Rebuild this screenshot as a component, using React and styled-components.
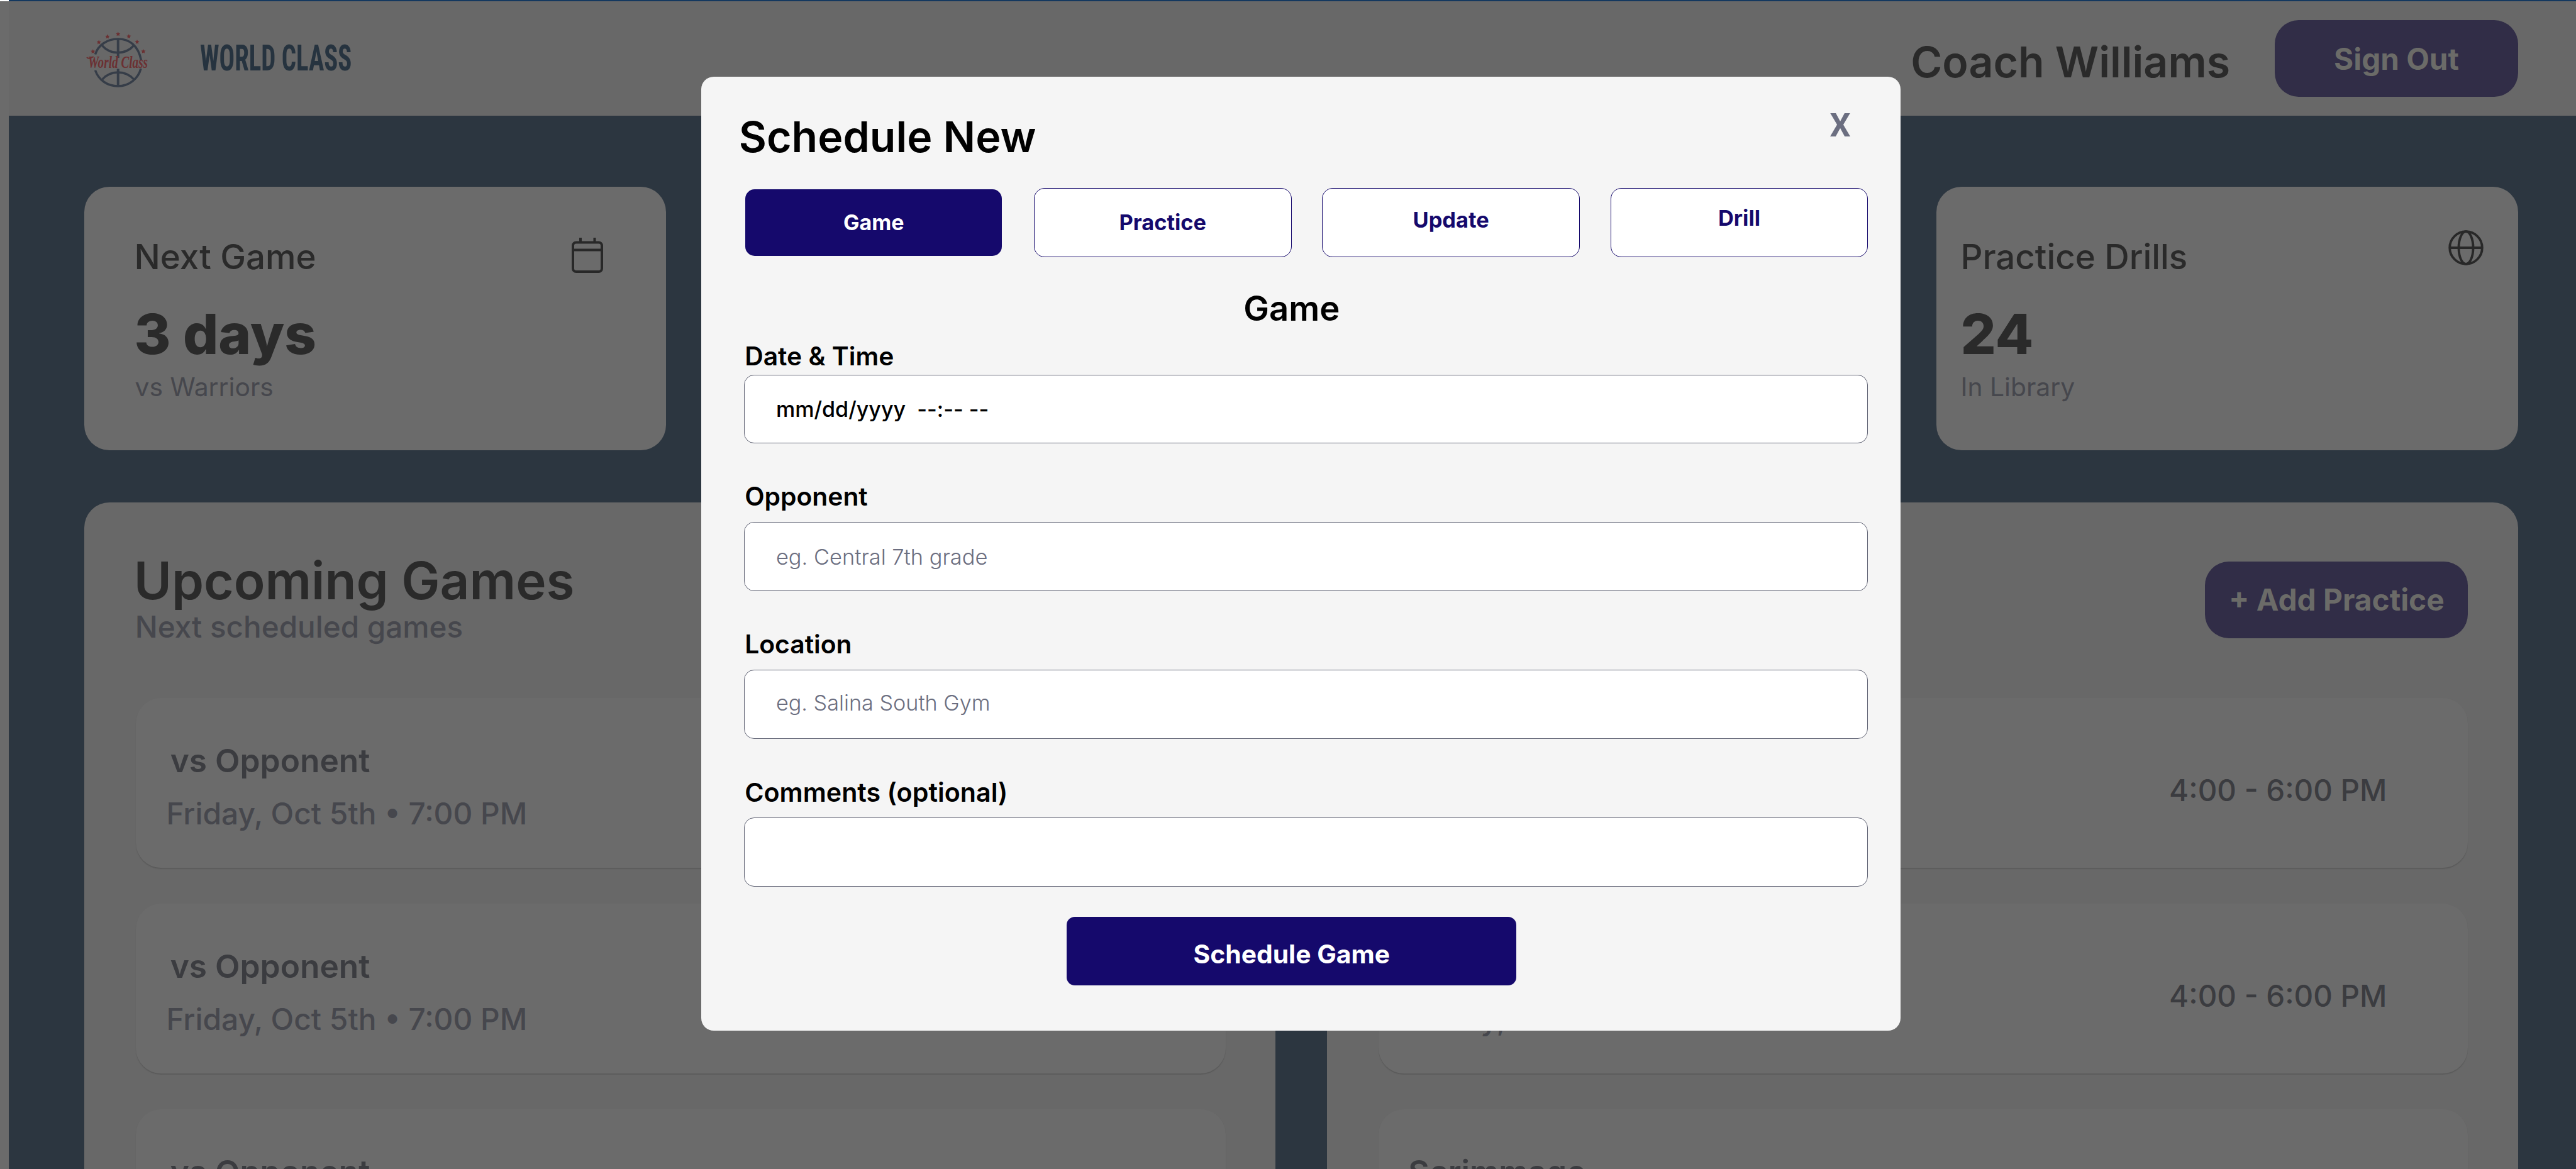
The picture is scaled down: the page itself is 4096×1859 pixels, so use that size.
import React from 'react';
import styled, { createGlobalStyle } from 'styled-components';

const Global = createGlobalStyle`
  * { box-sizing: border-box; }
  body { margin: 0; background: #2c3640; font-family: Inter, "Liberation Sans", sans-serif; }
`;

const Text = styled.span`
  display: block;
  line-height: 1;
  white-space: pre;
  font-size: ${p => p.$size}px;
  font-weight: ${p => p.$weight || 400};
  color: ${p => p.$color || '#2a2a2a'};
  margin-left: ${p => p.$shift || 0}px;
`;

const Page = styled.div`
  display: flex;
  width: 4096px;
  height: 1859px;
  overflow: hidden;
`;
const Rail = styled.div`
  flex: none;
  width: 14px;
  background: #6b6b6b;
  border-top: 2px solid #fff;
`;
const Content = styled.div`
  flex: 1;
  min-width: 0;
  background: #2c3640;
`;
const Header = styled.header`
  display: flex;
  align-items: center;
  height: 184px;
  padding: 0 92px 1px 118px;
  background: #686868;
  border-top: 2px solid #14385f;
`;
const Logo = styled.svg`
  flex: none;
  width: 111px;
  height: 104px;
  margin-top: 2px;
  overflow: visible;
`;
const Brand = styled.div`
  width: 260px;
  margin: 0 auto 1px 75px;
  font: 700 57px/1 "Roboto Condensed", Roboto, sans-serif;
  font-stretch: condensed;
  color: #26333f;
  white-space: nowrap;
  transform: scaleX(0.716);
  transform-origin: left center;
`;
const User = styled.div`
  margin: 11px 71px 0 0;
`;
const PillButton = styled.button`
  display: flex;
  justify-content: center;
  align-items: center;
  flex: none;
  width: ${p => p.$width}px;
  height: 122px;
  padding: ${p => p.$drop || 0}px 0 0;
  border: 0;
  border-radius: 38px;
  background: #312d47;
  font-family: inherit;
`;

const Main = styled.main`
  padding: 112.5px 92px 0 120.2px;
`;
const Stats = styled.section`
  display: grid;
  grid-template-columns: repeat(4, 1fr);
  gap: 56.5px;
  height: 419.5px;
  margin-bottom: 82.5px;
`;
const StatCard = styled.article`
  display: flex;
  justify-content: space-between;
  align-items: flex-start;
  grid-column: ${p => p.$column};
  padding: 84.7px ${p => p.$right}px 0 ${p => p.$left}px;
  border-radius: 40px;
  background: #6b6b6b;
`;
const StatBody = styled.div`
  display: flex;
  flex-direction: column;
`;
const Figure = styled.div`
  height: 159px;
  padding-top: 50.8px;
`;
const Icon = styled.svg`
  flex: none;
  width: ${p => p.$width}px;
  height: 56px;
  margin-top: ${p => p.$top}px;
  fill: none;
  stroke: #282828;
`;

const Panels = styled.section`
  display: grid;
  grid-template-columns: 1fr 1fr;
  gap: 82px;
`;
const Panel = styled.article`
  height: 1200px;
  padding: 0 79.6px 0 82.2px;
  border-radius: 40px;
  background: #686868;
`;
const PanelHead = styled.div`
  display: flex;
  justify-content: space-between;
  align-items: flex-start;
  height: 311.2px;
  padding-top: 84.5px;
`;
const PanelTitles = styled.div`
  display: flex;
  flex-direction: column;
  gap: 8.7px;
`;
const ButtonSlot = styled.div`
  margin-top: 9.5px;
`;
const List = styled.div`
  display: flex;
  flex-direction: column;
  gap: 56.5px;
`;
const Item = styled.div`
  display: flex;
  justify-content: space-between;
  height: 270.5px;
  padding: 0 129px 0 51px;
  border-radius: 40px;
  background: #6b6b6b;
  box-shadow: 0 2px 1px #5c5c5c;
`;
const ItemText = styled.div`
  display: flex;
  flex-direction: column;
  gap: 36.2px;
  padding-top: 74px;
`;
const ItemTime = styled.div`
  padding-top: 123.8px;
`;

const Overlay = styled.div`
  position: fixed;
  inset: 0;
  padding: 122px 0 0 1115.4px;
`;
const Modal = styled.section`
  display: flex;
  flex-direction: column;
  width: 1907px;
  height: 1517px;
  padding: 0 52px 0 68px;
  border-radius: 20px;
  background: #f5f5f5;
`;
const ModalHead = styled.div`
  display: flex;
  justify-content: space-between;
  padding: 0 28px 0 0;
  height: 176.6px;
`;
const ModalTitle = styled.div`
  padding-top: 61.4px;
`;
const Close = styled.button`
  align-self: flex-start;
  margin-top: 52px;
  padding: 0;
  border: 0;
  background: none;
  font: 700 52px/1 Roboto, sans-serif;
  color: #6b6e80;
`;
const Tabs = styled.div`
  display: flex;
  gap: 48.6px;
  height: 110.3px;
`;
const Tab = styled.button`
  display: flex;
  justify-content: center;
  align-items: center;
  flex: 1;
  padding: 0 0 ${p => p.$lift}px;
  border: ${p => (p.$active ? '2px solid transparent' : '1px solid #15096c')};
  border-radius: 17px;
  background: ${p => (p.$active ? '#15096c' : '#fff')};
  background-clip: padding-box;
  font-family: inherit;
`;
const Heading = styled.div`
  display: flex;
  justify-content: center;
  padding: 54px 46px 0 0;
`;
const Field = styled.div`
  display: flex;
  flex-direction: column;
  gap: ${p => p.$gap}px;
  margin-top: ${p => p.$top}px;
`;
const Input = styled.div`
  display: flex;
  align-items: center;
  height: 109.5px;
  padding: ${p => p.$drop || 0}px 0 ${p => p.$lift || 0}px 49.5px;
  border: 1px solid #5f6273;
  border-radius: 16px;
  background: #fff;
`;
const Submit = styled.button`
  display: flex;
  justify-content: center;
  align-items: center;
  width: 715px;
  height: 109px;
  margin: 48.5px 0 0 512.9px;
  padding: 9px 0 0;
  border: 0;
  border-radius: 13px;
  background: #15096c;
  font-family: inherit;
`;

const STARS = [[68, 173], [109, 109], [168, 70], [241, 53], [315, 69], [372, 107], [415, 172]];
const star = (cx, cy, r) =>
  Array.from({ length: 10 }, (_, i) => {
    const a = -Math.PI / 2 + (i * Math.PI) / 5;
    const d = i % 2 ? r * 0.5 : r;
    return `${(cx + d * Math.cos(a)).toFixed(1)},${(cy + d * Math.sin(a)).toFixed(1)}`;
  }).join(' ');

function BallLogo() {
  return (
    <Logo viewBox="0 0 480 450">
      <g fill="none" stroke="#363d48" strokeWidth="15">
        <path d="M84 193C103 130 165 86 241 86s138 44 159 146" />
        <path d="M84 302c23 68 85 109 157 109s138-48 157-121" />
        <path d="M241 86v130M241 292v119" strokeWidth="17" />
        <path d="M131 131c58 66 160 66 219 0" />
        <path d="M133 364c58-64 158-64 216 0" />
      </g>
      <g fill="#6b3032">
        {STARS.map(([x, y]) => (
          <polygon key={x} points={star(x, y, 16)} />
        ))}
        <text
          x="34"
          y="286"
          textLength="412"
          lengthAdjust="spacingAndGlyphs"
          fontFamily="Liberation Serif, serif"
          fontStyle="italic"
          fontWeight="700"
          fontSize="122"
        >
          World Class
        </text>
        <path d="M26 212c10 14 26 6 46-4" fill="none" stroke="#6b3032" strokeWidth="9" />
      </g>
    </Logo>
  );
}

const MUTED = '#46474d';
const SOFT = '#3b3c40';

function Row({ title, date, time }) {
  return (
    <Item>
      <ItemText>
        <Text $size={51.4} $weight={600} $color={SOFT} $shift={time ? -4 : 3.3}>{title}</Text>
        <Text $size={47.8} $weight={450} $color={MUTED} $shift={-3}>{date}</Text>
      </ItemText>
      {time && (
        <ItemTime>
          <Text $size={47.5} $weight={450} $color={SOFT}>{time}</Text>
        </ItemTime>
      )}
    </Item>
  );
}

function Labelled({ label, gap, top, size = 40.8, children, ...rest }) {
  return (
    <Field $gap={gap} $top={top}>
      <Text $size={size} $weight={600} $color="#000" $shift={0.8}>{label}</Text>
      <Input {...rest}>{children}</Input>
    </Field>
  );
}

export default function App() {
  return (
    <>
      <Global />
      <Page>
        <Rail />
        <Content>
          <Header>
            <BallLogo />
            <Brand>WORLD CLASS</Brand>
            <User>
              <Text $size={68} $weight={600}>Coach Williams</Text>
            </User>
            <PillButton $width={387} $drop={3}>
              <Text $size={47.6} $weight={700} $color="#6b6b68">Sign Out</Text>
            </PillButton>
          </Header>
          <Main>
            <Stats>
              <StatCard $column={1} $left={79.4} $right={100}>
                <StatBody>
                  <Text $size={54.6} $weight={450}>Next Game</Text>
                  <Figure><Text $size={88.4} $weight={800}>3 days</Text></Figure>
                  <Text $size={40.8} $color={MUTED} $shift={1}>vs Warriors</Text>
                </StatBody>
                <Icon viewBox="0 0 50 56" $width={50} $top={-3.5} strokeWidth="4">
                  <rect x="2" y="7.5" width="46" height="46.5" rx="5" />
                  <path d="M2 19.5h46M14 0v8M36.5 0v8" />
                </Icon>
              </StatCard>
              <StatCard $column={4} $left={38.5} $right={55}>
                <StatBody>
                  <Text $size={54.6} $weight={450}>Practice Drills</Text>
                  <Figure><Text $size={88.4} $weight={800}>24</Text></Figure>
                  <Text $size={40.8} $color={MUTED}>In Library</Text>
                </StatBody>
                <Icon viewBox="0 0 56 56" $width={56} $top={-15} strokeWidth="3.8">
                  <circle cx="28" cy="28" r="25.8" />
                  <ellipse cx="28" cy="28" rx="11.5" ry="25.8" />
                  <path d="M2.2 28h51.6" />
                </Icon>
              </StatCard>
            </Stats>
            <Panels>
              <Panel>
                <PanelHead>
                  <PanelTitles>
                    <Text $size={81.8} $weight={600} $shift={-3.6}>Upcoming Games</Text>
                    <Text $size={47.6} $weight={500} $color={MUTED} $shift={-1.6}>Next scheduled games</Text>
                  </PanelTitles>
                </PanelHead>
                <List>
                  <Row title="vs Opponent" date="Friday, Oct 5th • 7:00 PM" />
                  <Row title="vs Opponent" date="Friday, Oct 5th • 7:00 PM" />
                  <Row title="vs Opponent" date="Friday, Oct 5th • 7:00 PM" />
                </List>
              </Panel>
              <Panel>
                <PanelHead>
                  <PanelTitles />
                  <ButtonSlot>
                    <PillButton $width={418} $drop={2}>
                      <Text $size={47.8} $weight={700} $color="#6b6b68">+ Add Practice</Text>
                    </PillButton>
                  </ButtonSlot>
                </PanelHead>
                <List>
                  <Row title="Scrimmage" date="Friday, Oct 5th" time="4:00 - 6:00 PM" />
                  <Row title="Scrimmage" date="Friday, Oct 5th" time="4:00 - 6:00 PM" />
                  <Row title="Scrimmage" date="Friday, Oct 5th" time="4:00 - 6:00 PM" />
                </List>
              </Panel>
            </Panels>
          </Main>
        </Content>
      </Page>
      <Overlay>
        <Modal>
          <ModalHead>
            <ModalTitle>
              <Text $size={68} $weight={600} $color="#000" $shift={-8.7}>Schedule New</Text>
            </ModalTitle>
            <Close>X</Close>
          </ModalHead>
          <Tabs>
            <Tab $active $lift={0}><Text $size={34} $weight={700} $color="#fff">Game</Text></Tab>
            <Tab $lift={0}><Text $size={34.4} $weight={700} $color="#15096c">Practice</Text></Tab>
            <Tab $lift={6.2}><Text $size={34.4} $weight={700} $color="#15096c">Update</Text></Tab>
            <Tab $lift={13.2}><Text $size={34.4} $weight={700} $color="#15096c">Drill</Text></Tab>
          </Tabs>
          <Heading><Text $size={54.4} $weight={600} $color="#000">Game</Text></Heading>
          <Labelled label="Date & Time" gap={8.3} top={29.2} $drop={1}>
            <Text $size={34.1} $weight={470} $color="#000">mm/dd/yyyy  --:-- --</Text>
          </Labelled>
          <Labelled label="Opponent" gap={19.9} top={64.3} $drop={3}>
            <Text $size={34.4} $weight={300} $color="#6b6e80">eg. Central 7th grade</Text>
          </Labelled>
          <Labelled label="Location" gap={19.9} top={64.9} $lift={4.5}>
            <Text $size={34.2} $weight={300} $color="#6b6e80">eg. Salina South Gym</Text>
          </Labelled>
          <Labelled label="Comments (optional)" size={41.2} gap={19.6} top={64.9} />
          <Submit>
            <Text $size={40.8} $weight={700} $color="#fff">Schedule Game</Text>
          </Submit>
        </Modal>
      </Overlay>
    </>
  );
}
